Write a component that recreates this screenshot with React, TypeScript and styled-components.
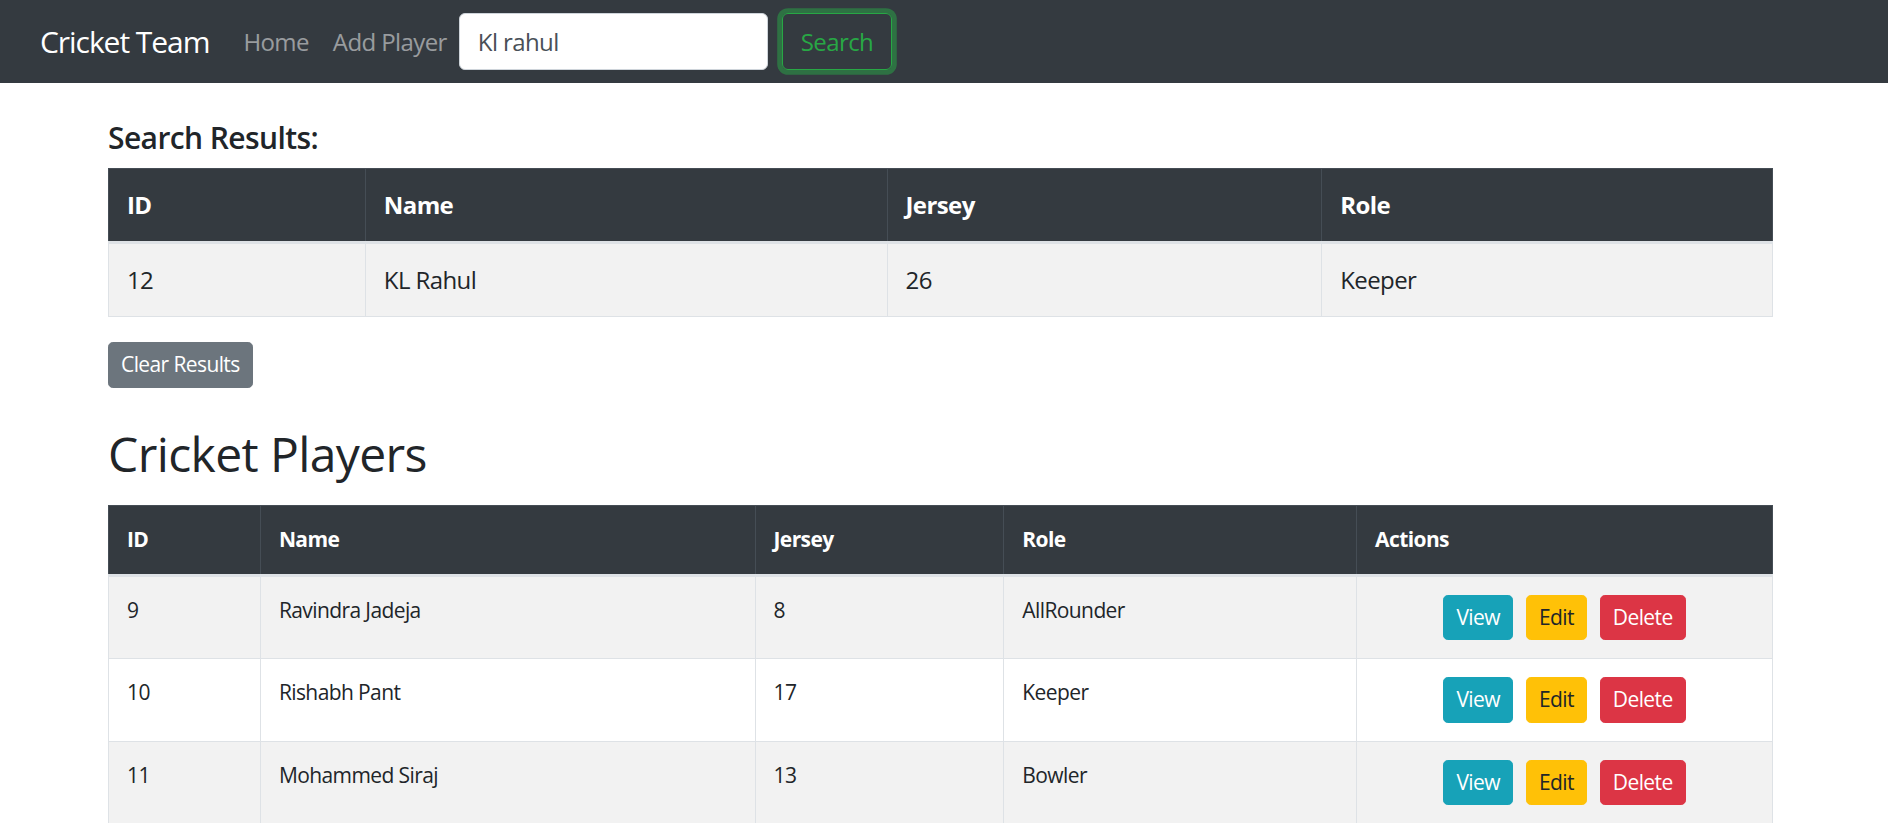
import React from "react";
import styled, { createGlobalStyle, css } from "styled-components";

const GlobalStyle = createGlobalStyle`
  html { scrollbar-width: none; }
  html::-webkit-scrollbar { display: none; }
  body {
    margin: 0;
    background: #fff;
    color: #212529;
    font-family: "Open Sans", "Noto Sans", "Liberation Sans", sans-serif;
    font-size: 24px;
    line-height: 1.5;
    letter-spacing: -0.025em;
  }
  * { box-sizing: border-box; }
`;

const Navbar = styled.nav`
  display: flex;
  align-items: center;
  height: 83px;
  padding: 0 24px 0 40px;
  background: #343a40;
`;

const Brand = styled.a`
  font-size: 30px;
  line-height: 1.5;
  letter-spacing: -0.035em;
  color: #fff;
  text-decoration: none;
  margin-right: 22px;
`;

const NavList = styled.div`
  display: flex;
  align-items: center;
`;

const NavLink = styled.a`
  padding: 0 12px;
  font-size: 24px;
  color: rgba(255, 255, 255, 0.5);
  text-decoration: none;
`;

const SearchForm = styled.form`
  display: flex;
  align-items: center;
  gap: 14px;
`;

const SearchInput = styled.input`
  width: 309px;
  height: 57px;
  padding: 9px 18px;
  font-family: inherit;
  font-size: 24px;
  letter-spacing: inherit;
  color: #495057;
  background: #fff;
  border: 1.5px solid #ced4da;
  border-radius: 6px;
  outline: none;
`;

const SearchButton = styled.button`
  height: 57px;
  padding: 9px 18px;
  font-family: inherit;
  font-size: 24px;
  letter-spacing: inherit;
  line-height: 1.5;
  color: #28a745;
  background: transparent;
  border: 1.5px solid #28a745;
  border-radius: 6px;
  box-shadow: 0 0 0 4.8px rgba(40, 167, 69, 0.5);
`;

const Main = styled.main`
  width: 1665px;
  margin-left: 108px;
  padding-top: 37px;
`;

const SectionTitle = styled.h5`
  margin: 0 0 12px;
  font-size: 30px;
  font-weight: 600;
  line-height: 1.2;
`;

const PageTitle = styled.h2`
  margin: 37px 0 23px;
  font-size: 48px;
  font-weight: 400;
  line-height: 1.2;
`;

const Table = styled.table<{ $compact?: boolean }>`
  width: 100%;
  border-collapse: collapse;
  margin-bottom: 25px;
  font-size: ${(p) => (p.$compact ? "21px" : "24px")};
  line-height: 1.5;
`;

const Th = styled.th<{ $w: number }>`
  width: ${(p) => p.$w}px;
  padding: 18px;
  text-align: left;
  vertical-align: bottom;
  font-weight: 700;
  color: #fff;
  background: #343a40;
  border: 1px solid #454d55;
  border-bottom: 3px solid #dee2e6;
`;

const Row = styled.tr`
  &:nth-of-type(odd) {
    background: #f2f2f2;
  }
`;

const Td = styled.td<{ $center?: boolean }>`
  padding: 18px;
  vertical-align: top;
  border: 1px solid #dee2e6;
  text-align: ${(p) => (p.$center ? "center" : "left")};
`;

const Actions = styled.div`
  display: flex;
  justify-content: center;
  gap: 13px;
`;

type Variant = "info" | "warning" | "danger" | "secondary";

const variants: Record<Variant, ReturnType<typeof css>> = {
  info: css`background: #17a2b8; border-color: #17a2b8; color: #fff;`,
  warning: css`background: #ffc107; border-color: #ffc107; color: #212529;`,
  danger: css`background: #dc3545; border-color: #dc3545; color: #fff;`,
  secondary: css`background: #6c757d; border-color: #6c757d; color: #fff;`,
};

const SmallButton = styled.button<{ $variant: Variant }>`
  padding: 6px 12px;
  font-family: inherit;
  font-size: 21px;
  letter-spacing: inherit;
  line-height: 1.5;
  border: 1.5px solid transparent;
  border-radius: 4.8px;
  ${(p) => variants[p.$variant]}
`;

const searchCols = [
  { label: "ID", w: 257 },
  { label: "Name", w: 522 },
  { label: "Jersey", w: 435 },
  { label: "Role", w: 451 },
];

const playerCols = [
  { label: "ID", w: 152 },
  { label: "Name", w: 495 },
  { label: "Jersey", w: 249 },
  { label: "Role", w: 353 },
  { label: "Actions", w: 416 },
];

const players = [
  { id: 9, name: "Ravindra Jadeja", jersey: 8, role: "AllRounder" },
  { id: 10, name: "Rishabh Pant", jersey: 17, role: "Keeper" },
  { id: 11, name: "Mohammed Siraj", jersey: 13, role: "Bowler" },
  { id: 12, name: "KL Rahul", jersey: 26, role: "Keeper" },
];

export default function App() {
  return (
    <>
      <GlobalStyle />
      <Navbar>
        <Brand href="#">Cricket Team</Brand>
        <NavList>
          <NavLink href="#">Home</NavLink>
          <NavLink href="#">Add Player</NavLink>
        </NavList>
        <SearchForm onSubmit={(e) => e.preventDefault()}>
          <SearchInput defaultValue="Kl rahul" />
          <SearchButton type="submit">Search</SearchButton>
        </SearchForm>
      </Navbar>
      <Main>
        <SectionTitle>Search Results:</SectionTitle>
        <Table>
          <thead>
            <tr>
              {searchCols.map((c) => (
                <Th key={c.label} $w={c.w}>{c.label}</Th>
              ))}
            </tr>
          </thead>
          <tbody>
            <Row>
              <Td>12</Td>
              <Td>KL Rahul</Td>
              <Td>26</Td>
              <Td>Keeper</Td>
            </Row>
          </tbody>
        </Table>
        <SmallButton $variant="secondary">Clear Results</SmallButton>
        <PageTitle>Cricket Players</PageTitle>
        <Table $compact>
          <thead>
            <tr>
              {playerCols.map((c) => (
                <Th key={c.label} $w={c.w}>{c.label}</Th>
              ))}
            </tr>
          </thead>
          <tbody>
            {players.map((p) => (
              <Row key={p.id}>
                <Td>{p.id}</Td>
                <Td>{p.name}</Td>
                <Td>{p.jersey}</Td>
                <Td>{p.role}</Td>
                <Td $center>
                  <Actions>
                    <SmallButton $variant="info">View</SmallButton>
                    <SmallButton $variant="warning">Edit</SmallButton>
                    <SmallButton $variant="danger">Delete</SmallButton>
                  </Actions>
                </Td>
              </Row>
            ))}
          </tbody>
        </Table>
      </Main>
    </>
  );
}
